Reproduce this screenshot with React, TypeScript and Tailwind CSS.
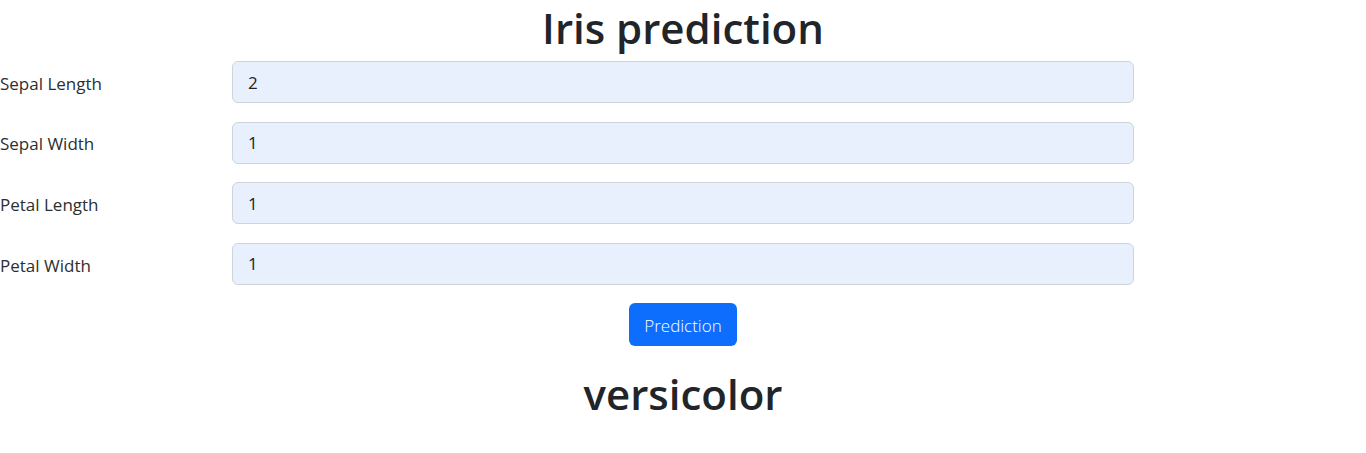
import React, { useState } from 'react';

const fields = [
  { key: 'sepalLength', label: 'Sepal Length', value: '2' },
  { key: 'sepalWidth', label: 'Sepal Width', value: '1' },
  { key: 'petalLength', label: 'Petal Length', value: '1' },
  { key: 'petalWidth', label: 'Petal Width', value: '1' },
];

export default function App() {
  const [values, setValues] = useState<Record<string, string>>(
    Object.fromEntries(fields.map(f => [f.key, f.value]))
  );
  const [result] = useState('versicolor');

  return (
    <div className="w-[1366px] h-[453px] bg-white text-[#212529] font-['Open_Sans',sans-serif]">
      <h1 className="h-[61px] text-center text-[42px] leading-[56px] font-semibold">
        Iris prediction
      </h1>

      <div className="flex flex-col gap-[18.67px]">
        {fields.map(f => (
          <div key={f.key} className="flex items-center">
            <label className="w-[232px] pt-[3px] text-[17px] font-normal text-[#2b2f33]">
              {f.label}
            </label>
            <input
              value={values[f.key]}
              onChange={e => setValues({ ...values, [f.key]: e.target.value })}
              className="w-[902px] h-[42px] px-[15px] bg-[#e8f0fe] border border-[#ced4da] rounded-[6px] text-[17px] text-[#212529] focus:outline-none"
            />
          </div>
        ))}
      </div>

      <div className="flex justify-center mt-[18px]">
        <button className="w-[108px] h-[43px] pt-[2px] bg-[#0d6efd] text-white rounded-[6px] text-[17px] font-light">
          Prediction
        </button>
      </div>

      <h2 className="mt-[20px] text-center text-[42px] leading-[56px] font-semibold">
        {result}
      </h2>
    </div>
  );
}
